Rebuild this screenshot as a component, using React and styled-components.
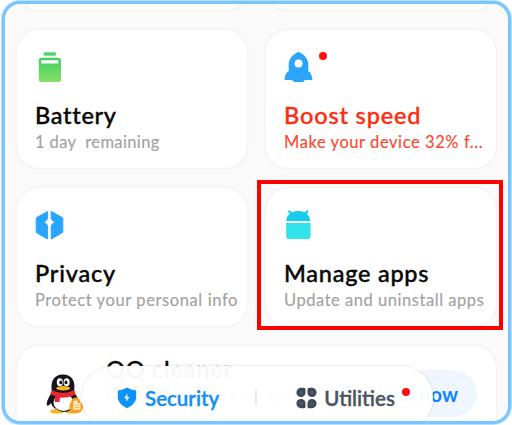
import React from "react";
import styled, { createGlobalStyle } from "styled-components";

const GlobalStyle = createGlobalStyle`
  * { box-sizing: border-box; }
  body { margin: 0; background: #fff; font-family: Lato, "Noto Sans", sans-serif; }
`;

const Page = styled.div`
  width: 512px;
  height: 425px;
  padding: 1px 1px 1px 2px;
  overflow: hidden;
`;

const Frame = styled.main`
  position: relative;
  height: 423px;
  border: 3px solid #7ac5ff;
  border-radius: 18px;
  background: #fafafa;
  box-shadow: 0 0 0 1px #b5dfff;
  overflow: hidden;
`;

const Grid = styled.div`
  display: grid;
  grid-template-columns: 234px 234px;
  grid-template-rows: 8px 142px 142px 110px;
  column-gap: 15px;
  row-gap: 16px;
  padding-left: 10px;
`;

const Card = styled.section`
  border: 2px solid #f5f5f5;
  border-radius: 25px;
  background: #fff;
  padding: 22px 0 0 18px;
  white-space: nowrap;
  min-width: 0;
`;

const CutCard = styled.div`
  height: 50px;
  margin-top: -42px;
  border: 2px solid #f5f5f5;
  border-radius: 25px;
  background: #fff;
`;

const IconRow = styled.div`
  display: flex;
  height: 34px;
  gap: 5px;
`;

const Dot = styled.span`
  width: 8px;
  height: 8px;
  border-radius: 50%;
  background: #fb1010;
`;

const Title = styled.h2`
  margin: 15px 0 0;
  height: 29px;
  font-size: 23.5px;
  line-height: 28px;
  font-weight: 500;
  letter-spacing: ${(p) => p.$track || 0}px;
  color: ${(p) => p.$color || "#080808"};
  -webkit-text-stroke: 0.4px currentColor;
`;

const Subtitle = styled.p`
  margin: 0;
  height: 24px;
  font-size: 16.5px;
  line-height: 24px;
  letter-spacing: ${(p) => p.$track || 0}px;
  color: ${(p) => p.$color || "#a2a2a2"};
  -webkit-text-stroke: 0.15px currentColor;
  white-space: pre;
`;

const CleanerCard = styled(Card)`
  grid-column: 1 / -1;
  display: flex;
  padding: 0 19px 0 29px;
`;

const CleanerText = styled.div`
  flex: 1;
  padding: 9px 0 0 20px;
`;

const CleanerTitle = styled.h2`
  margin: 0;
  font-size: 23.5px;
  line-height: 28px;
  font-weight: 500;
  letter-spacing: 0.8px;
  color: #080808;
  -webkit-text-stroke: 0.4px currentColor;
`;

const PenguinSlot = styled.div`
  padding-top: 28px;
  height: 70px;
`;

const CleanButton = styled.button`
  margin-top: 24px;
  width: 116px;
  height: 47px;
  border: 0;
  border-radius: 24px;
  background: #f0f6ff;
  color: #0d84ff;
  font: 700 20px/48px Lato, sans-serif;
  text-align: right;
  padding: 0 19px 0 0;
`;

const TabBar = styled.nav`
  position: absolute;
  left: 77px;
  top: 362px;
  width: 351px;
  height: 64px;
  border-radius: 32px;
  background: rgba(255, 255, 255, 0.965);
  box-shadow: 0 0 3px rgba(0, 0, 0, 0.16);
  display: flex;
  align-items: center;
  padding-left: 35px;
`;

const Tab = styled.div`
  display: flex;
  align-items: center;
  gap: ${(p) => p.$gap}px;
  color: ${(p) => p.$color};
  font-size: 20.5px;
  line-height: 28px;
  font-weight: 600;
  letter-spacing: ${(p) => p.$track || 0}px;
  -webkit-text-stroke: 0.35px currentColor;
`;

const TabDivider = styled.i`
  width: 2px;
  height: 16px;
  margin: 0 39px 0 36px;
  background: #eaeaea;
`;

const TabDot = styled(Dot)`
  margin: -12px 0 0 7px;
`;

const BatteryIcon = () => (
  <svg width="30" height="34" viewBox="0 0 30 34">
    <defs>
      <linearGradient id="bat" x1="0" y1="0" x2="0" y2="1">
        <stop offset="0" stopColor="#3fcf66" />
        <stop offset="1" stopColor="#86e065" />
      </linearGradient>
    </defs>
    <rect x="8.5" y="0.2" width="12.5" height="3.6" rx="1.3" fill="#50d56d" />
    <path fill="url(#bat)" fillRule="evenodd" d="M6 5.7H23.2Q26 5.7 26 8.4V27.4Q26 30 23.4 30H6.4Q3.8 30 3.8 27.4V8.4Q3.8 5.7 6.4 5.7ZM6.2 8.2V11.5H23.3V8.2Z" />
  </svg>
);

const RocketIcon = () => (
  <svg width="30" height="34" viewBox="0 0 30 34">
    <path fill="#2aa5fb" fillRule="evenodd" d="M14.5 0C19.2 1.7 24.3 6.6 24.3 12V19.3C26.7 20.4 27.6 22.3 28.5 28H21L19 29.9H10L8 28H.5C1.3 22.3 2.3 20.4 4.7 19.3V12C4.7 6.6 9.8 1.7 14.5 0ZM14.5 7.5A4 4 0 1 0 14.5 15.5A4 4 0 1 0 14.5 7.5Z" />
  </svg>
);

const PrivacyIcon = () => (
  <svg width="30" height="34" viewBox="0 0 30 34">
    <g fill="#28a5ff" stroke="#28a5ff" strokeWidth="1" strokeLinejoin="round">
      <path d="M12.6 1.4V8.5Q11.8 11 8.2 12.1Q11.8 13.2 12.6 16V29L1.6 22.7Q1.2 22.3 1.2 21.5V8.5Q1.2 7.8 1.8 7.4Z" />
      <path d="M16.2 1.4V8.5Q17 11 20.6 12.1Q17 13.2 16.2 16V29L27.2 22.7Q27.8 22.3 27.8 21.5V8.5Q27.8 7.8 27.2 7.4Z" />
    </g>
  </svg>
);

const AndroidIcon = () => (
  <svg width="30" height="34" viewBox="0 0 30 34">
    <path fill="#15cdeb" d="M2.2 11C2.5 7.3 3.9 5.2 5.9 3.7L3.9 1.2Q4.7-.1 5.8.6L8 2.3Q14.3-.5 20.5 2.3L22.9.6Q24.4-.1 24.6 1.2L22.8 3.8Q25.8 6.2 26.4 11Z" />
    <path fill="#31e3eb" d="M2.2 13H26.6V26.3Q26.6 29 23.8 29H5Q2.2 29 2.2 26.3Z" />
  </svg>
);

const Penguin = () => (
  <svg width="40" height="42" viewBox="0 0 40 42">
    <ellipse cx="11" cy="37.3" rx="7" ry="2.3" fill="#f9b51c" />
    <ellipse cx="26" cy="37.3" rx="7" ry="2.3" fill="#f9b51c" />
    <path fill="#15151b" d="M6 18C4 7 8 .5 17 .5S30 7 28 18L33 26Q35 31 33 32L29 29Q27 38 17 38S6 35 5 29Q2 33 .8 31Q0 27 6 18Z" />
    <ellipse cx="17.5" cy="28.5" rx="10" ry="8.5" fill="#fff" />
    <ellipse cx="13.8" cy="8.2" rx="3" ry="4" fill="#fff" />
    <ellipse cx="20.6" cy="8.2" rx="3" ry="4" fill="#fff" />
    <ellipse cx="14.8" cy="8.4" rx="1.5" ry="1.9" fill="#15151b" />
    <ellipse cx="20" cy="8.4" rx="1.5" ry="1.9" fill="#15151b" />
    <ellipse cx="17.2" cy="14.2" rx="7" ry="2.2" fill="#f9b51c" />
    <path fill="#e92732" d="M5.8 16Q17 22 28.4 16L29.7 20.5Q22 24.4 14 23.5L13.5 28H8.7L9.2 22Q6 21.5 4.3 20Z" />
    <path fill="#f5a01f" d="M25 28Q26 23.5 30 23.5Q34 23.5 34 28Q37 29 37 33.5Q36.5 39 30 39H26Q23 38 23.5 33Q23.5 29 25 28Z" />
    <path fill="#ffe9c0" d="M27.5 27.5Q28 26 31.5 26.5V29H34.5V35.8H26.8Z" />
    <path stroke="#f3bd68" strokeWidth="1" d="M28.5 31.2H33.5M28.5 33.5H33.5" />
  </svg>
);

const ShieldIcon = () => (
  <svg width="20" height="22" viewBox="0 0 20 22">
    <path fill="#0e92fb" d="M10 .6Q14 3 19.2 3.4V11.3Q18.5 17 10 21.3Q1.5 17 .8 11.3V3.4Q6 3 10 .6Z" />
    <path fill="#fff" d="M10.6 6.5L7.1 11.3H9.4L9 14.8L12.7 9.9H10.2Z" />
  </svg>
);

const UtilitiesIcon = () => (
  <svg width="21" height="22" viewBox="0 0 21 22">
    <g fill="#3f4a59">
      <path d="M5 .8H8Q9.5.8 9.5 2.3V6A4.5 4 0 0 1 5 10A4.6 4.6 0 0 1 5 .8Z" />
      <path d="M16 .8H13Q11.5.8 11.5 2.3V6A4.5 4 0 0 0 16 10A4.6 4.6 0 0 0 16 .8Z" />
      <path d="M5 21.2H8Q9.5 21.2 9.5 19.7V16A4.5 4 0 0 0 5 12A4.6 4.6 0 0 0 5 21.2Z" />
      <path d="M16 21.2H13Q11.5 21.2 11.5 19.7V16A4.5 4 0 0 1 16 12A4.6 4.6 0 0 1 16 21.2Z" />
    </g>
    <g fill="#525d6b">
      <circle cx="5.2" cy="5.5" r="1.6" />
      <circle cx="15.8" cy="5.5" r="1.6" />
      <circle cx="5.2" cy="16.5" r="1.6" />
      <circle cx="15.8" cy="16.5" r="1.6" />
    </g>
  </svg>
);

const features = [
  { name: "Battery", note: "1 day  remaining", Icon: BatteryIcon, track: 0.7, noteTrack: 0.38 },
  { name: "Boost speed", note: "Make your device 32% f...", Icon: RocketIcon, track: 0.85, noteTrack: 0.57, alert: true },
  { name: "Privacy", note: "Protect your personal info", Icon: PrivacyIcon, track: 0.8, noteTrack: 0.6 },
  { name: "Manage apps", note: "Update and uninstall apps", Icon: AndroidIcon, track: 0.75, noteTrack: 0.54 },
];

const Highlight = styled.div`
  position: absolute;
  left: 252px;
  top: 176px;
  width: 246px;
  height: 150px;
  border: 4px solid #fe0000;
`;

export default function App() {
  return (
    <Page>
      <GlobalStyle />
      <Frame>
        <Grid>
          <CutCard />
          <CutCard />
          {features.map(({ name, note, Icon, track, noteTrack, alert }) => (
            <Card key={name}>
              <IconRow>
                <Icon />
                {alert && <Dot />}
              </IconRow>
              <Title $track={track} $color={alert && "#fb2d10"}>{name}</Title>
              <Subtitle $track={noteTrack} $color={alert && "#fa482f"}>{note}</Subtitle>
            </Card>
          ))}
          <CleanerCard>
            <PenguinSlot><Penguin /></PenguinSlot>
            <CleanerText>
              <CleanerTitle>QQ cleaner</CleanerTitle>
              <Subtitle $track={0.5}>Clean QQ to free up space</Subtitle>
            </CleanerText>
            <CleanButton>Clean now</CleanButton>
          </CleanerCard>
        </Grid>
        <Highlight />
        <TabBar>
          <Tab $gap={8} $color="#148ff5" $track={0}>
            <ShieldIcon />
            Security
          </Tab>
          <TabDivider />
          <Tab $gap={7} $color="#4b5461" $track={0}>
            <UtilitiesIcon />
            Utilities
          </Tab>
          <TabDot />
        </TabBar>
      </Frame>
    </Page>
  );
}
